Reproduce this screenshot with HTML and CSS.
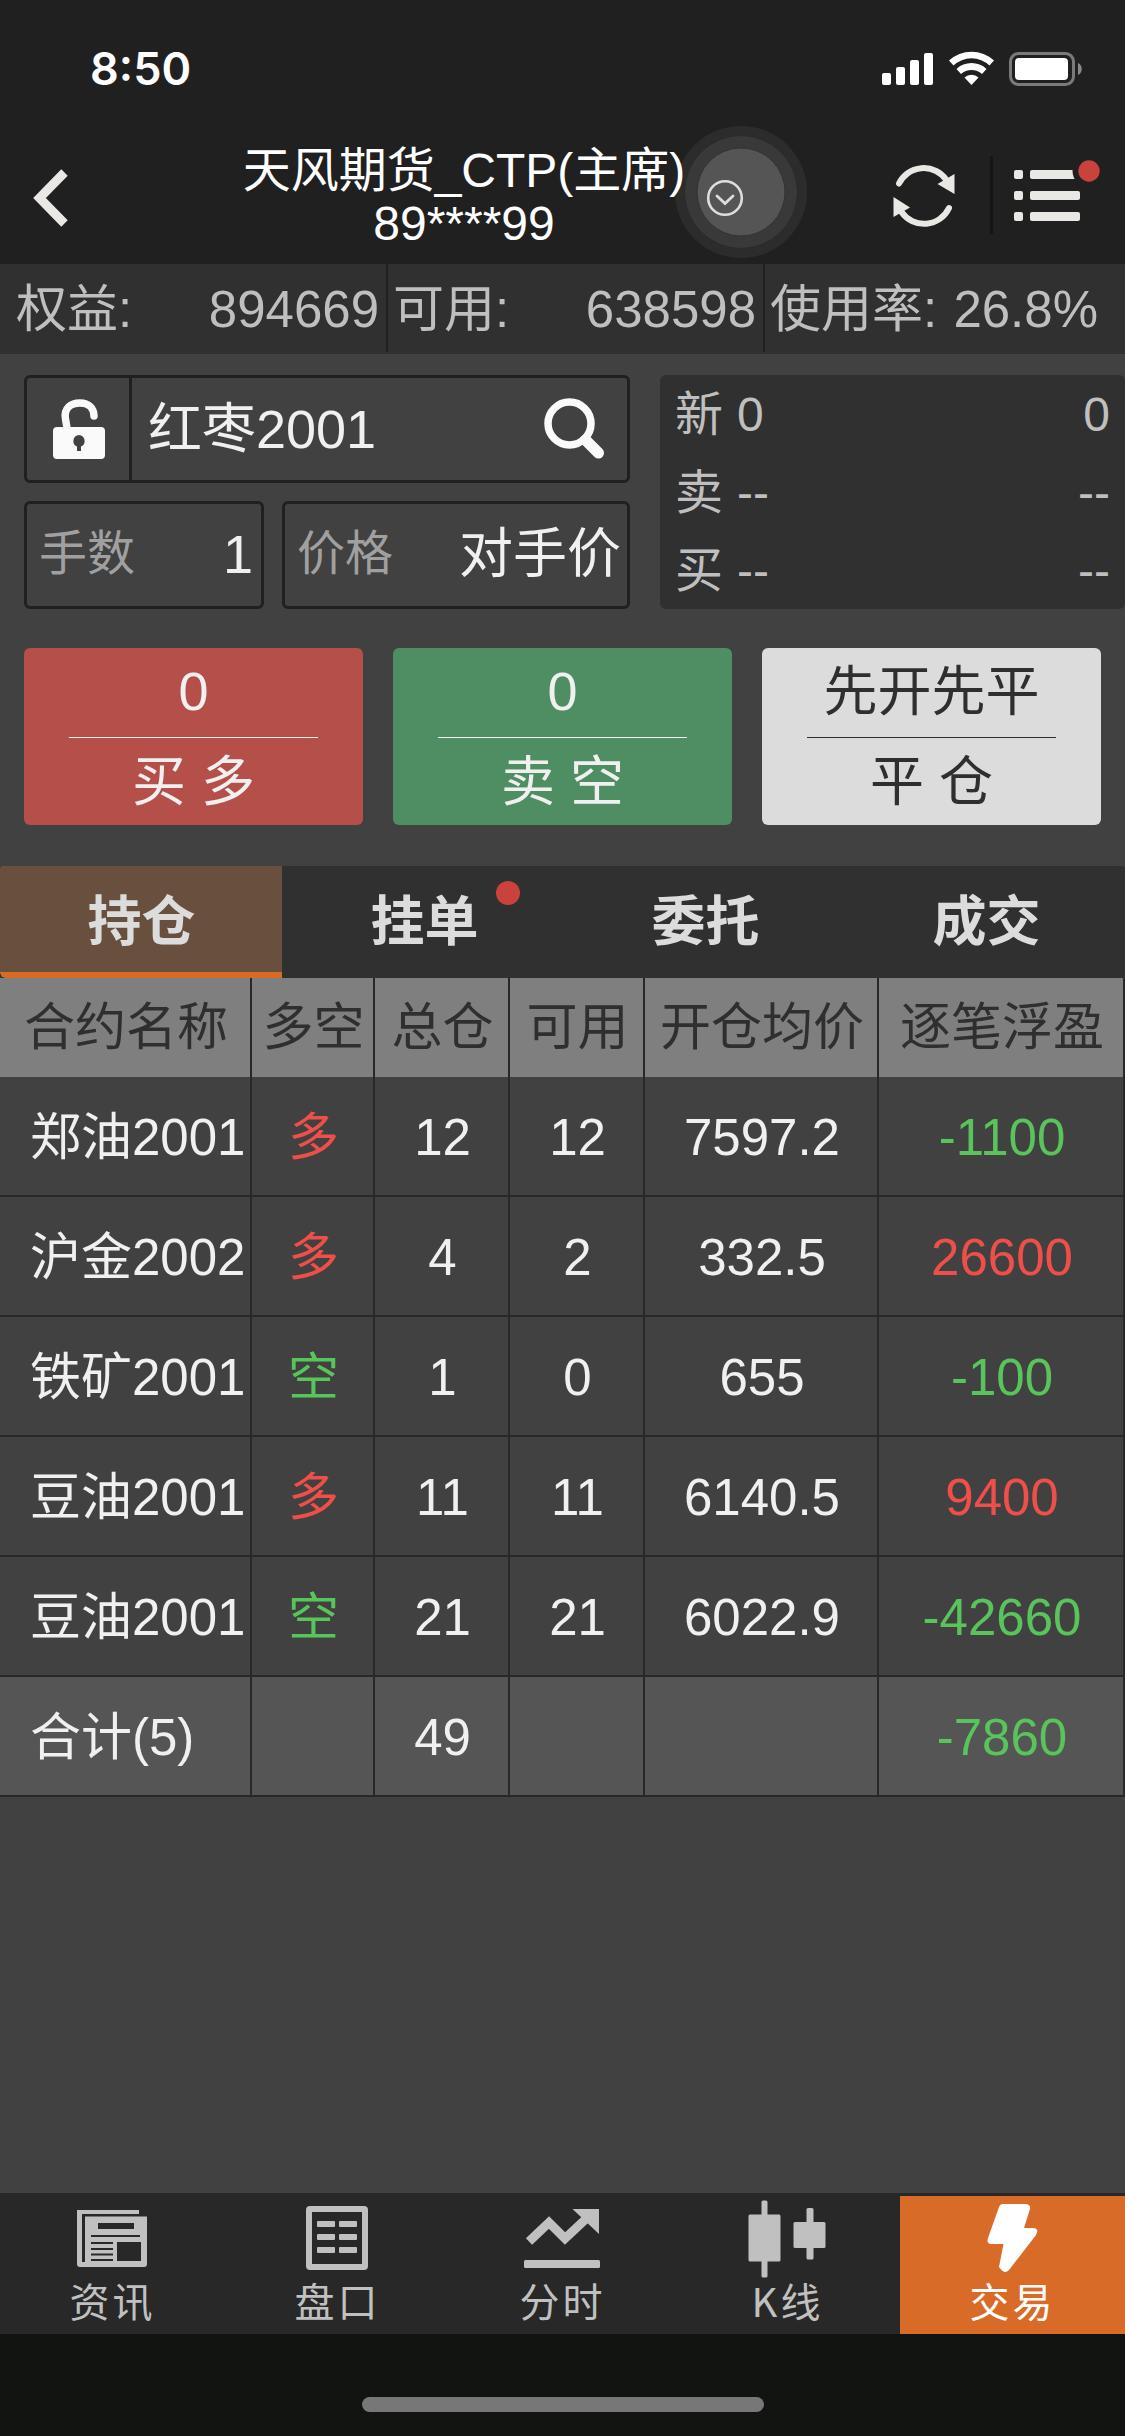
FILE: index.html
```html
<!DOCTYPE html>
<html lang="zh-CN">
<head>
<meta charset="utf-8">
<title>交易</title>
<link rel="stylesheet" href="styles.css">
</head>
<body>
<div class="app">
  <div class="status">
    <span class="clock">8:50</span>
    <svg class="signals" viewBox="0 0 202 36" width="202" height="36" fill="#fff">
      <rect x="0" y="22" width="9" height="12" rx="2"/><rect x="14" y="16" width="9" height="18" rx="2"/><rect x="28" y="9" width="9" height="25" rx="2"/><rect x="42" y="2" width="9" height="32" rx="2"/>
      <path d="M67 9.500a33 33 0 0 1 45 0l-4.500 5a26 26 0 0 0-36 0z"/>
      <path d="M74.500 18a22 22 0 0 1 30 0l-4.500 5a15.500 15.500 0 0 0-21 0z"/>
      <path d="M82.500 26.500a10.500 10.500 0 0 1 14 0l-7 7.500z"/>
      <rect x="128.500" y="2.500" width="63" height="31" rx="8" fill="none" stroke="#7a7a7a" stroke-width="3"/>
      <rect x="133" y="7" width="53" height="22" rx="4"/>
      <path d="M196 12c5 2 5 10 0 12z" fill="#8a8a8a"/>
    </svg>
  </div>
  <header class="header">
    <svg class="back" viewBox="0 0 36 58" width="36" height="58"><path d="M31.500 3.500 6.500 29l25 25.500" fill="none" stroke="#e9e8e4" stroke-width="9"/></svg>
    <div class="title"><div>天风期货_CTP(主席)</div><div>89****99</div></div>
    <svg class="touch" viewBox="0 0 180 180" width="180" height="180">
      <circle cx="90" cy="90" r="89" fill="#fff" opacity=".004"/>
      <circle cx="90" cy="90" r="66" fill="#fff" opacity=".055"/>
      <circle cx="90" cy="90" r="56.500" fill="#393939" stroke="#2a2a2a"/>
      <circle cx="90" cy="90" r="44" fill="#555" stroke="#333"/>
      <circle cx="74" cy="96" r="16.800" fill="none" stroke="#ddd" stroke-width="2.600"/>
      <path d="m66 94 8 7.500 8-7.500" fill="none" stroke="#ddd" stroke-width="2.800" stroke-linecap="round"/>
    </svg>
    <svg class="refresh" viewBox="0 0 62 62" width="62" height="62">
      <g fill="none" stroke="#e9e8e4" stroke-width="6" stroke-linecap="round"><path d="M6 18.500a27.500 27.500 0 0 1 47-4"/><path d="M56 43a27.500 27.500 0 0 1-47.500 4"/></g>
      <path d="M61.500 9v20L44.500 19zM.500 52V32l16.500 10.500z" fill="#e9e8e4"/>
    </svg>
    <i class="rule"></i>
    <svg class="menu" viewBox="0 0 90 64" width="90" height="64">
      <g fill="#e9e8e4"><rect x="0" y="10" width="9" height="9" rx="2"/><rect x="16" y="10" width="50" height="9" rx="2"/><rect x="0" y="31" width="9" height="9" rx="2"/><rect x="16" y="31" width="50" height="9" rx="2"/><rect x="0" y="52" width="9" height="9" rx="2"/><rect x="16" y="52" width="50" height="9" rx="2"/></g>
      <circle cx="75" cy="11" r="16.500" fill="#202020"/><circle cx="75" cy="11" r="10.700" fill="#c9423e"/>
    </svg>
  </header>

  <section class="account">
    <div class="stat equity"><span>权益:</span><span>894669</span></div>
    <div class="stat avail"><span>可用:</span><span>638598</span></div>
    <div class="stat usage"><span>使用率:</span><span>26.8%</span></div>
  </section>

  <section class="order">
    <div class="form">
      <div class="box symbol">
        <div class="lock"><svg viewBox="0 0 52 60" width="52" height="60"><path d="M14 29 12.500 20C10.500 9 18 4 27 4c9 0 14 5.500 14 13" fill="none" stroke="#fafafa" stroke-width="7.500" stroke-linecap="round"/><path fill="#fafafa" fill-rule="evenodd" d="M4 28h44q4 0 4 4v24q0 4-4 4H4q-4 0-4-4V32q0-4 4-4zM26 36a6 6 0 0 0-2 11.500V52h4v-4.500A6 6 0 0 0 26 36z"/></svg></div>
        <span class="code">红枣2001</span>
        <svg class="search" viewBox="0 0 62 62" width="62" height="62" fill="none" stroke="#fafafa"><circle cx="25.500" cy="25.500" r="21.500" stroke-width="7.500"/><path d="m41.500 42 13 13" stroke-width="11" stroke-linecap="round"/></svg>
      </div>
      <div class="pair">
        <div class="box field lots"><label>手数</label><span>1</span></div>
        <div class="box field price"><label>价格</label><span>对手价</span></div>
      </div>
    </div>
    <div class="quote">
      <div class="qrow"><b>新</b><span>0</span><em>0</em></div>
      <div class="qrow"><b>卖</b><span>--</span><em>--</em></div>
      <div class="qrow"><b>买</b><span>--</span><em>--</em></div>
    </div>
  </section>

  <section class="actions">
    <div class="btn buy"><div class="top">0</div><div class="bottom">买 多</div></div>
    <div class="btn sell"><div class="top">0</div><div class="bottom">卖 空</div></div>
    <div class="btn close"><div class="top">先开先平</div><div class="bottom">平 仓</div></div>
  </section>

  <nav class="tabs">
    <div class="tab active">持仓</div>
    <div class="tab"><span class="dotted">挂单<i class="dot"></i></span></div>
    <div class="tab">委托</div>
    <div class="tab">成交</div>
  </nav>

  <section class="grid">
    <div class="row head"><div>合约名称</div><div>多空</div><div>总仓</div><div>可用</div><div>开仓均价</div><div>逐笔浮盈</div></div>
    <div class="row"><div class="name">郑油2001</div><div class="up">多</div><div>12</div><div>12</div><div>7597.2</div><div class="down">-1100</div></div>
    <div class="row"><div class="name">沪金2002</div><div class="up">多</div><div>4</div><div>2</div><div>332.5</div><div class="up">26600</div></div>
    <div class="row"><div class="name">铁矿2001</div><div class="down">空</div><div>1</div><div>0</div><div>655</div><div class="down">-100</div></div>
    <div class="row"><div class="name">豆油2001</div><div class="up">多</div><div>11</div><div>11</div><div>6140.5</div><div class="up">9400</div></div>
    <div class="row"><div class="name">豆油2001</div><div class="down">空</div><div>21</div><div>21</div><div>6022.9</div><div class="down">-42660</div></div>
    <div class="row total"><div class="name">合计(5)</div><div></div><div>49</div><div></div><div></div><div class="down">-7860</div></div>
  </section>

  <nav class="bar">
    <div class="item"><svg viewBox="0 0 80 80" width="80" height="80"><path fill="#c0c0c0" fill-rule="evenodd" d="M5 12h62v4H10v48h3V18.500h62V66q0 3-3 3H8q-3 0-3-3zM26 25v6h36v-6zM19 37v2h49v-2zM19 44v2h22v-2zM19 50v2h22v-2zM19 55.500v2h22v-2zM19 61v2h22v-2zM45 44v19h24V44z"/></svg><span>资讯</span></div>
    <div class="item"><svg viewBox="0 0 80 80" width="80" height="80"><rect x="12" y="11" width="56" height="58" rx="1" fill="none" stroke="#c0c0c0" stroke-width="6"/><g fill="#c0c0c0"><rect x="20" y="23" width="18" height="6" rx="1"/><rect x="42" y="23" width="18" height="6" rx="1"/><rect x="20" y="36" width="18" height="6" rx="1"/><rect x="42" y="36" width="18" height="6" rx="1"/><rect x="20" y="49" width="18" height="6" rx="1"/><rect x="42" y="49" width="18" height="6" rx="1"/></g></svg><span>盘口</span></div>
    <div class="item"><svg viewBox="0 0 80 80" width="80" height="80"><path d="m7 43.500 20-19L43 40.500 66 19" fill="none" stroke="#c0c0c0" stroke-width="9"/><path d="M50.500 11H77v25z" fill="#c0c0c0"/><rect x="2" y="62" width="76" height="8" rx="1.500" fill="#c0c0c0"/></svg><span>分时</span></div>
    <div class="item"><svg viewBox="0 0 80 80" width="80" height="80" fill="#c0c0c0"><rect x="1.500" y="16.500" width="32" height="47" rx="1.500"/><rect x="14.500" y="2.500" width="6" height="77" rx="1.500"/><rect x="46.500" y="24" width="32" height="26" rx="1.500"/><rect x="59.500" y="10" width="7" height="51.500" rx="1.500"/></svg><span>K线</span></div>
    <div class="item on"><svg viewBox="0 0 80 80" width="80" height="80"><path d="M31 6h22q6 0 5 5l-6 19h8q8 0 4 7L37 72q-3 3-5.500 1.500T27 69l4.500-23H20q-6 0-4-6L27 9q1-3 4-3z" fill="#fff"/></svg><span>交易</span></div>
  </nav>
  <div class="home"><i></i></div>
</div>
</body>
</html>
```
FILE: styles.css
```css
* { box-sizing: border-box; }
body {
  margin: 0;
  background: #414141;
  color: #f0f0f0;
  font-family: "Liberation Sans", "Noto Sans CJK SC", sans-serif;
  white-space: nowrap;
}
svg { display: block; flex: none; }
.app { width: 1125px; height: 2436px; display: flex; flex-direction: column; overflow: hidden; }

.status {
  height: 132px;
  padding: 0 41px 0 90px;
  background: #202020;
  display: flex;
  justify-content: space-between;
}
.clock { margin-top: 41px; font: 600 45px/56px Inter, sans-serif; color: #fff; }
.signals { margin-top: 51px; }

.header {
  position: relative;
  height: 132px;
  padding-left: 33px;
  background: #202020;
  display: flex;
  align-items: flex-start;
  color: #fff;
}
.back { margin-top: 37px; }
.title { width: 450px; margin: 12px 0 0 170px; text-align: center; font-size: 48px; line-height: 53px; }
.touch { position: absolute; left: 651px; top: -30px; z-index: 1; }
.refresh { margin: 33px 0 0 204px; }
.rule { width: 3px; height: 78px; margin: 24px 0 0 35px; background: #151515; }
.menu { margin: 28px 0 0 21px; }

.account { height: 90px; background: #303030; display: flex; color: #bfbfbf; font-size: 51px; line-height: 91px; }
.stat { display: flex; justify-content: space-between; height: 88px; }
.equity { width: 388px; padding: 0 7px 0 16px; border-right: 2px solid #202020; }
.avail { width: 377px; padding: 0 7px 0 5px; border-right: 2px solid #202020; }
.usage { width: 360px; padding: 0 27px 0 5px; }

.order { height: 294px; padding: 21px 0 0 24px; display: flex; gap: 30px; }
.form { width: 606px; display: flex; flex-direction: column; gap: 18px; }
.box { height: 108px; border: 3px solid #202020; border-radius: 6px; display: flex; }
.symbol { align-items: center; padding-right: 21px; }
.lock { width: 105px; height: 102px; padding-left: 1px; border-right: 3px solid #202020; display: flex; align-items: center; justify-content: center; }
.code { flex: 1; padding-left: 16px; font-size: 54px; line-height: 102px; }
.pair { display: flex; gap: 18px; }
.field { justify-content: space-between; line-height: 100px; font-size: 54px; }
.field label { color: #a0a0a0; font-size: 48px; }
.lots { width: 240px; padding: 0 8px 0 12px; }
.price { width: 348px; padding: 0 6px 0 12px; }
.quote { width: 465px; height: 234px; padding: 0 15px; background: #303030; border-radius: 6px; color: #bfbfbf; font-size: 48px; }
.qrow { height: 78px; line-height: 79px; display: flex; }
.qrow b, .qrow em { font: inherit; }
.qrow b { width: 62px; }
.qrow em { margin-left: auto; }

.actions { height: 218px; padding: 0 24px; display: flex; gap: 30px; }
.btn { width: 339px; height: 177px; padding: 0 45px; border-radius: 6px; text-align: center; font-size: 54px; }
.top { height: 90px; line-height: 87px; border-bottom: 1px solid; }
.bottom { line-height: 88px; }
.buy { background: #b54f4a; }
.sell { background: #4f8d63; }
.close { background: #dcdcdc; color: #2f2f2f; }
.close .top { line-height: 89px; }

.tabs { height: 112px; background: #303030; display: flex; color: #dcdcdc; font-size: 54px; font-weight: 600; line-height: 113px; border-radius: 3px; }
.tab { width: 281px; padding-left: 4px; text-align: center; }
.tab.active { width: 282px; padding-left: 1px; background: #69503e; border-bottom: 6px solid #d86b27; border-radius: 3px 0 0 6px; }
.dotted { position: relative; }
.dot { position: absolute; width: 24px; height: 24px; right: -41px; top: -11px; border-radius: 50%; background: #c9423e; }

.grid { height: 1215px; font-size: 51px; }
.row { display: grid; grid-template-columns: 252px 123px 135px 135px 234px 246px; height: 120px; line-height: 121px; text-align: center; }
.row > div { height: 120px; padding-left: 2px; border-right: 2px solid #282828; border-bottom: 2px solid #282828; }
.row.head { height: 99px; line-height: 100px; background: #7f7f7f; color: #2f2f2f; }
.row.head > div { height: 99px; border-bottom: 0; }
.row.total { background: #555; }
.row .name { padding-left: 30px; text-align: left; }
.up { color: #ee4f4a; }
.down { color: #59c35c; }

.bar { height: 141px; padding-top: 3px; background: #282828; display: flex; color: #c0c0c0; }
.item { flex: 1; display: flex; flex-direction: column; align-items: center; padding-top: 2px; font: 40px/44px "Noto Sans CJK SC", sans-serif; letter-spacing: 3px; }
.item svg { margin-left: -1px; }
.item.on { background: #d86b27; color: #fff; }
.home { height: 102px; background: #111410; display: flex; justify-content: center; padding-top: 63px; }
.home i { width: 402px; height: 15px; border-radius: 8px; background: #777; }
```
